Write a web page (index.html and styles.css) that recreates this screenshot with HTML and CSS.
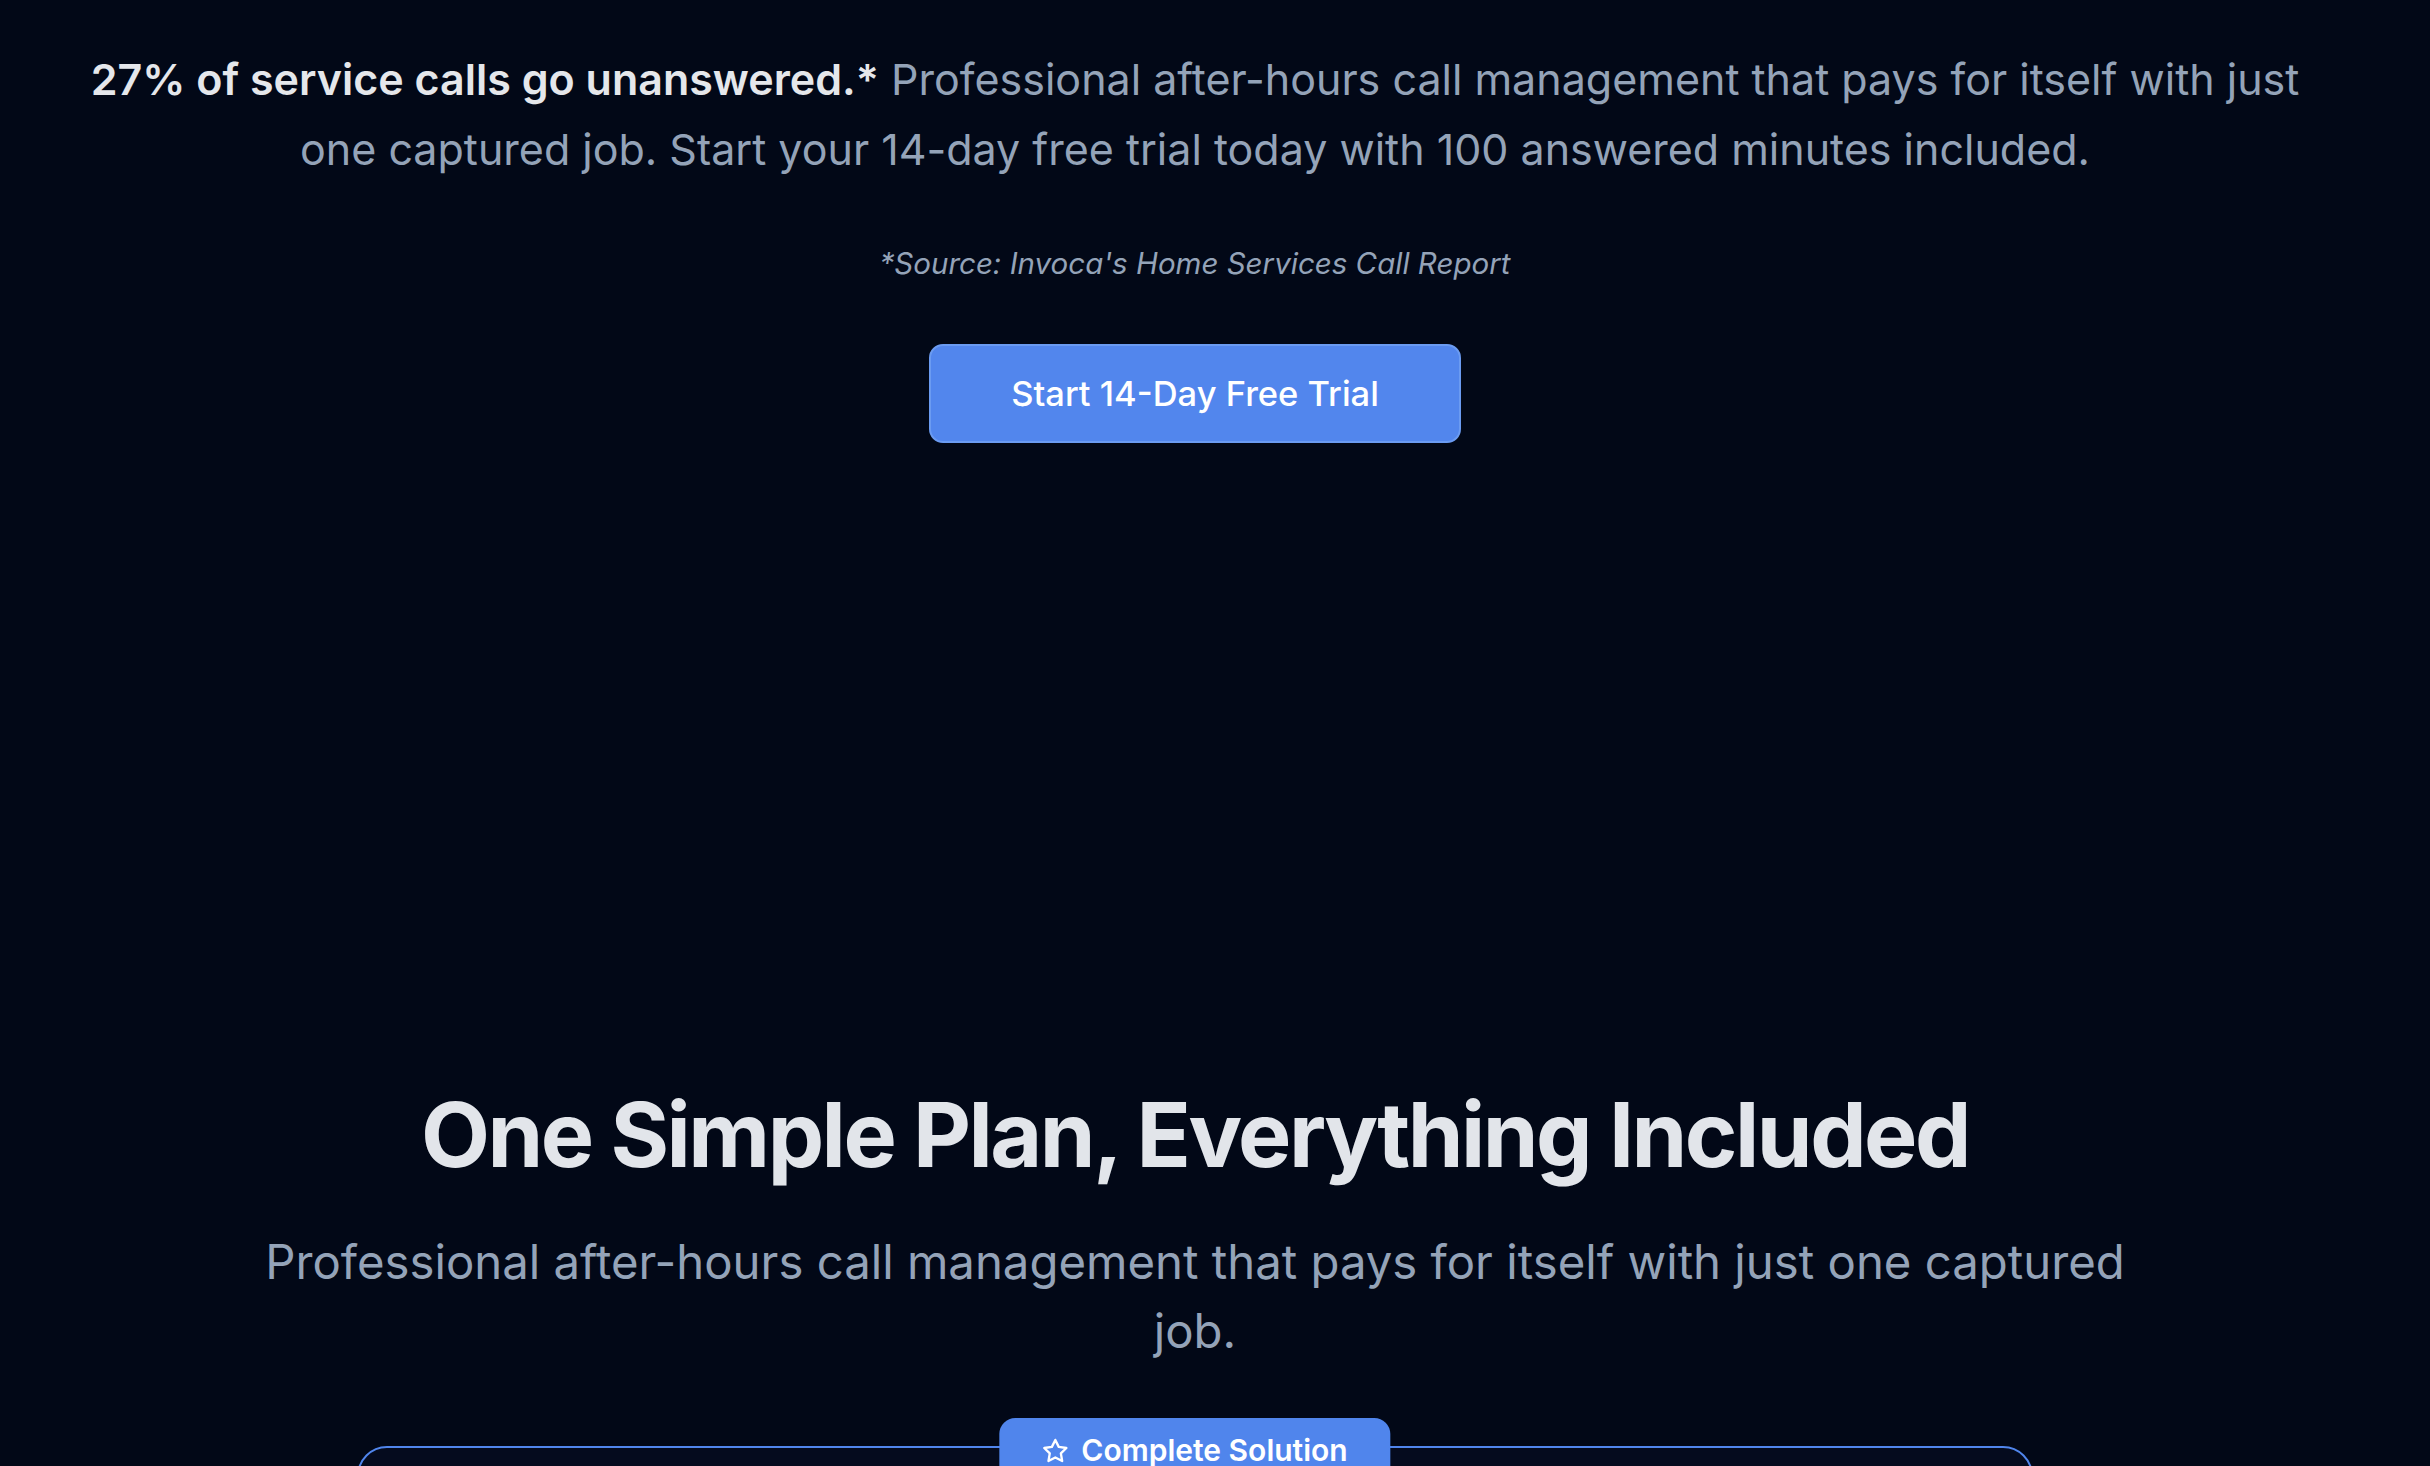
FILE: index.html
```html
<!DOCTYPE html>
<html lang="en">
<head>
<meta charset="utf-8">
<title>One Simple Plan</title>
<link rel="stylesheet" href="styles.css">
</head>
<body>
<div class="page">
  <section class="hero">
    <p class="lead"><strong>27% of service calls go unanswered.*</strong> Professional after-hours call management that pays for itself with just one captured job. Start your 14-day free trial today with 100 answered minutes included.</p>
    <p class="source">*Source: Invoca's Home Services Call Report</p>
    <a class="cta" href="#">Start 14-Day Free Trial</a>
  </section>
  <section class="pricing">
    <h2 class="title">One Simple Plan, Everything Included</h2>
    <p class="subtitle">Professional after-hours call management that pays for itself with just one captured job.</p>
    <div class="card">
      <div class="badge">
        <svg class="star" viewBox="0 0 24 24" fill="none" stroke="currentColor" stroke-width="2" stroke-linejoin="round" stroke-linecap="round"><path d="M12 2.5l2.94 5.96 6.56.95-4.75 4.63 1.12 6.54L12 17.5l-5.87 3.08 1.12-6.54L2.5 9.41l6.56-.95z"/></svg>
        <span>Complete Solution</span>
      </div>
      <div class="card-body"></div>
    </div>
  </section>
</div>
</body>
</html>
```

FILE: styles.css
```css
html, body {
  margin: 0;
  padding: 0;
  background: #020817;
  height: 100%;
  overflow: hidden;
}
body {
  font-family: Inter, "Noto Sans", "Liberation Sans", sans-serif;
  color: #e5e7eb;
}
.page {
  width: 2390px;
  display: flex;
  flex-direction: column;
  align-items: center;
}
.hero {
  display: flex;
  flex-direction: column;
  align-items: center;
  padding-top: 44px;
}
.lead {
  margin: 0;
  max-width: 2250px;
  text-align: center;
  font-size: 43px;
  line-height: 70px;
  color: #94a3b8;
}
.lead strong {
  color: #e5e7eb;
  font-weight: 600;
}
.source {
  margin: 59px 0 0;
  font-size: 29.5px;
  line-height: 40px;
  font-style: italic;
  color: #94a3b8;
}
.cta {
  margin-top: 61px;
  box-sizing: border-box;
  height: 99px;
  padding: 0 80px;
  display: flex;
  align-items: center;
  justify-content: center;
  background: #5286ed;
  border: 2px solid #6b9bf1;
  border-radius: 14px;
  color: #ffffff;
  font-size: 34.5px;
  font-weight: 500;
  text-decoration: none;
}
.pricing {
  display: flex;
  flex-direction: column;
  align-items: center;
  margin-top: 642px;
}
.title {
  margin: 0;
  font-size: 89.6px;
  line-height: 100px;
  font-weight: 700;
  letter-spacing: -2.5px;
  color: #e2e5ea;
}
.subtitle {
  margin: 42px 0 0;
  max-width: 1900px;
  text-align: center;
  font-size: 47.3px;
  line-height: 69px;
  color: #94a3b8;
}
.card {
  position: relative;
  margin-top: 81px;
  width: 1676px;
  box-sizing: border-box;
  height: 400px;
  border: 2px solid #5085ec;
  border-radius: 30px;
  background: #050b1e;
}
.badge {
  position: absolute;
  left: 50%;
  top: -30px;
  transform: translateX(-50%);
  box-sizing: border-box;
  height: 70px;
  padding: 14px 43px 0 42px;
  display: flex;
  align-items: flex-start;
  gap: 12px;
  background: #5085ec;
  border-radius: 16px;
  color: #ffffff;
  font-size: 30px;
  font-weight: 600;
  white-space: nowrap;
}
.star {
  width: 28px;
  height: 28px;
  margin-top: 5px;
}
```
